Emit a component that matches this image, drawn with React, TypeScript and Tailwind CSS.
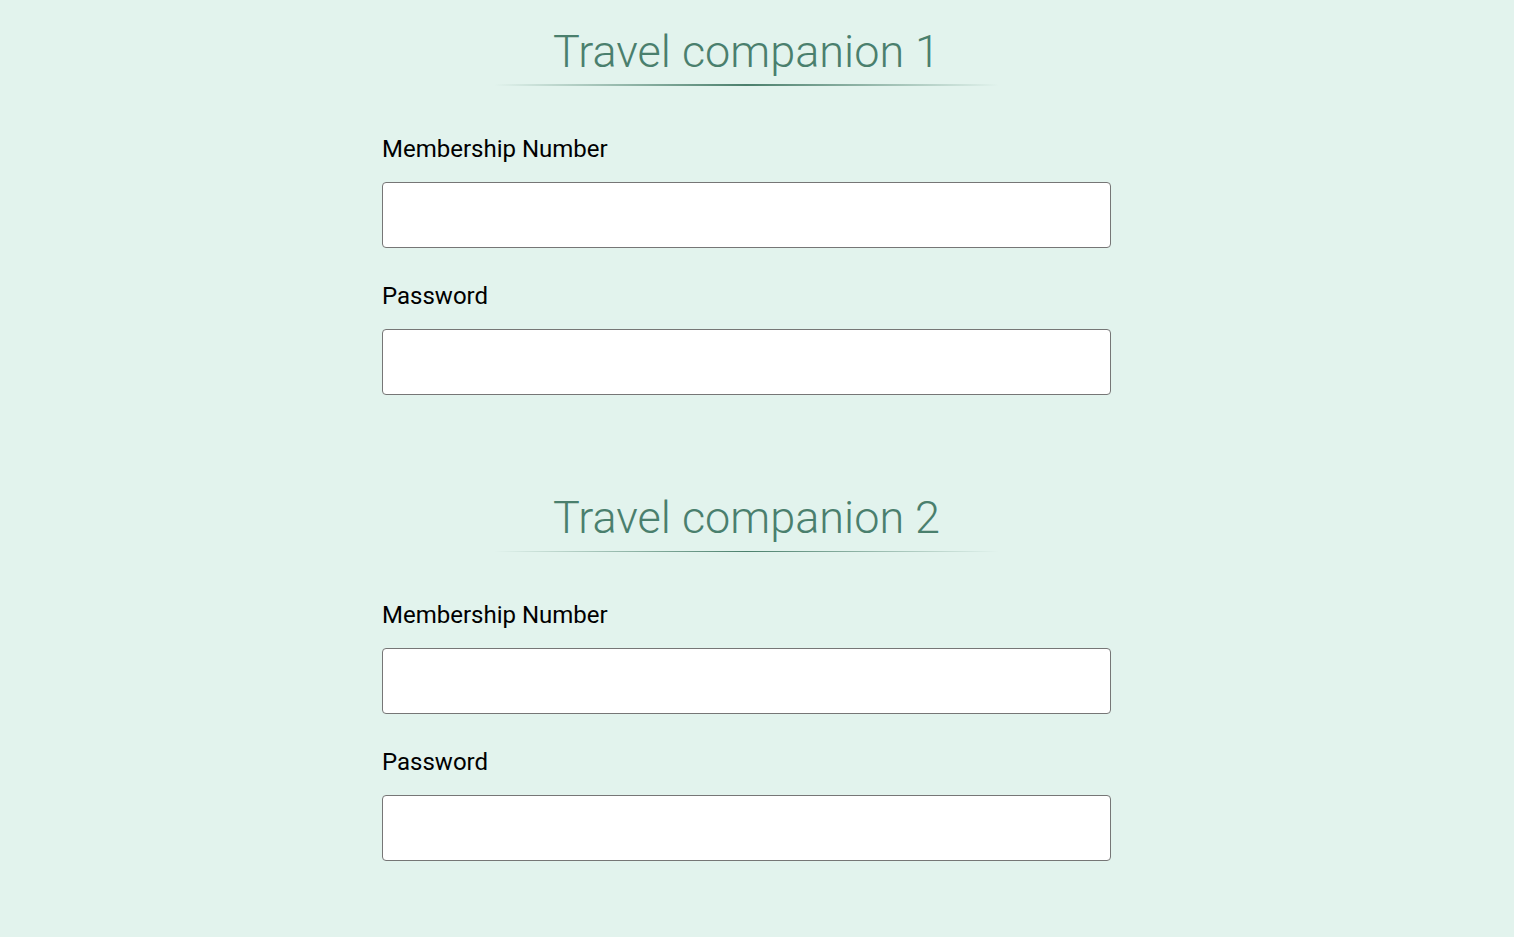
import React from "react";

function Field({ label, top }: { label: string; top: string }) {
  return (
    <div className={top}>
      <label className="block text-[24px] leading-[28px] text-black">{label}</label>
      <input
        type="text"
        className="mt-[19px] block h-[66px] w-full rounded-[4px] border border-[#767676] bg-white px-3 outline-none"
      />
    </div>
  );
}

function Section({ n, top, line }: { n: number; top: string; line: string }) {
  return (
    <section className={top}>
      <h2 className="text-center text-[45px] font-light leading-[55px] text-[#4a7f6d]">
        Travel companion {n}
      </h2>
      <div
        className={
          "mx-auto w-[505px] bg-[linear-gradient(to_right,rgba(75,127,108,0),rgba(75,127,108,1)_50%,rgba(75,127,108,0))] " +
          line
        }
      />
      <Field label="Membership Number" top="mt-[49px]" />
      <Field label="Password" top="mt-[34px]" />
    </section>
  );
}

export default function App() {
  return (
    <div
      className="min-h-[937px] w-full bg-[#e2f3ed] pb-[76px]"
      style={{ fontFamily: "Roboto, 'Noto Sans', sans-serif" }}
    >
      <div className="ml-[382px] w-[729px] pt-[24px]">
        <Section n={1} top="" line="mt-[5px] h-[2px]" />
        <Section n={2} top="mt-[95px]" line="mt-[6px] h-px" />
      </div>
    </div>
  );
}
